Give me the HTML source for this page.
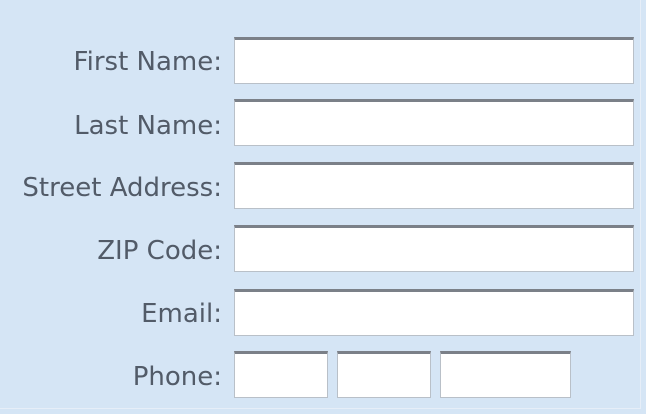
<!DOCTYPE html><html><head><style>
body{margin:0;width:646px;height:414px;background:#d5e5f5;overflow:hidden;font-family:"DejaVu Sans","Liberation Sans",sans-serif;position:relative}
.l{position:absolute;right:424px;font-size:26px;color:#525b68;line-height:28px;white-space:nowrap}
.i{position:absolute;background:#fff;border:1px solid #b9c0c8;border-top:3px solid #7b8088;box-sizing:border-box;height:47px}
.p{position:absolute;left:0;top:0;width:640px;height:408px;border-right:1px solid #e6eef8;border-bottom:1px solid #e6eef8}
</style></head><body>
<div class="p"></div>
<div class="l" style="top:48px">First Name:</div><div class="i" style="left:234px;top:37px;width:400px"></div>
<div class="l" style="top:112px">Last Name:</div><div class="i" style="left:234px;top:99px;width:400px"></div>
<div class="l" style="top:174px">Street Address:</div><div class="i" style="left:234px;top:162px;width:400px"></div>
<div class="l" style="top:237px">ZIP Code:</div><div class="i" style="left:234px;top:225px;width:400px"></div>
<div class="l" style="top:300px">Email:</div><div class="i" style="left:234px;top:289px;width:400px"></div>
<div class="l" style="top:363px">Phone:</div>
<div class="i" style="left:234px;top:351px;width:94px"></div>
<div class="i" style="left:337px;top:351px;width:94px"></div>
<div class="i" style="left:440px;top:351px;width:131px"></div>
</body></html>
